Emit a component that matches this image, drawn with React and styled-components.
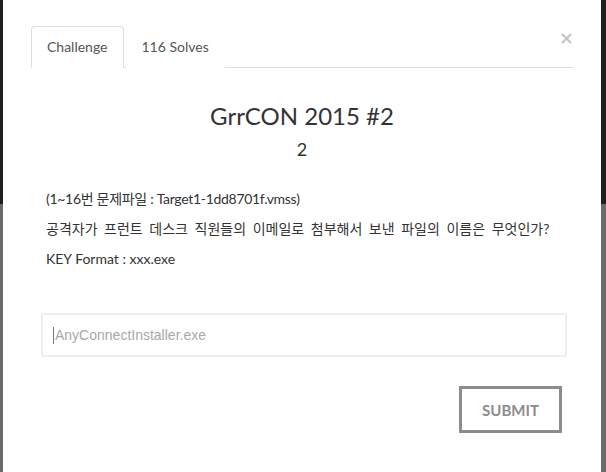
import React from "react";
import styled, { createGlobalStyle } from "styled-components";

const GlobalStyle = createGlobalStyle`
  html, body {
    margin: 0;
    padding: 0;
    width: 606px;
    height: 472px;
    overflow: hidden;
  }
  body {
    font-family: Lato, "Noto Sans CJK KR", sans-serif;
    color: #333;
  }
  * { box-sizing: border-box; }
`;

const Backdrop = styled.div`
  position: relative;
  width: 606px;
  height: 472px;
  display: flex;
  flex-direction: column;
`;

const DarkBand = styled.div`
  height: 204px;
  background: #1f1f1f;
`;

const GreyBand = styled.div`
  flex: 1;
  background: #6a6a6a;
`;

const Modal = styled.div`
  position: absolute;
  left: 3px;
  top: 0;
  width: 598px;
  height: 472px;
  background: #fff;
  padding: 26px 28px 0;
`;

const TabBar = styled.div`
  position: relative;
  display: flex;
  border-bottom: 1px solid #ddd;
  height: 42px;
`;

const Tab = styled.div`
  padding: 10px 15px;
  margin-right: 2px;
  font-size: 14px;
  line-height: 20px;
  color: #555;
  border: 1px solid ${(p) => (p.$active ? "#ddd" : "transparent")};
  border-bottom-color: transparent;
  border-radius: 4px 4px 0 0;
  background: #fff;
  height: 42px;
  margin-bottom: -1px;
`;

const Close = styled.button`
  position: absolute;
  right: 1px;
  top: 7px;
  border: 0;
  background: none;
  padding: 0;
  width: 11px;
  height: 11px;
  display: flex;
  cursor: pointer;
`;

const Title = styled.h3`
  margin: 35px 0 0;
  font-size: 24px;
  font-weight: 400;
  line-height: 26px;
  text-align: center;
  color: #333;
`;

const Value = styled.h4`
  margin: 10px 0 0;
  font-size: 18px;
  font-weight: 400;
  line-height: 20px;
  text-align: center;
  color: #333;
`;

const Description = styled.div`
  margin-top: 30px;
  padding-left: 15px;
`;

const Para = styled.p`
  margin: 0 0 10px;
  font-size: 14px;
  line-height: 20px;
  color: #333;
  font-family: Lato, "Noto Sans CJK KR", sans-serif;
  letter-spacing: ${(p) => p.$tracking || "normal"};
  word-spacing: ${(p) => p.$wordGap || "normal"};
`;

const Form = styled.form`
  margin-top: 44px;
  padding: 0 6px 0 10px;
  display: flex;
  flex-direction: column;
`;

const InputWrap = styled.div`
  position: relative;
`;

const Input = styled.input`
  width: 100%;
  height: 44px;
  border: 2px solid #efefef;
  padding: 0 12px;
  font-family: "Liberation Sans", Arial, sans-serif;
  font-size: 14px;
  color: #555;
  outline: none;
  &::placeholder {
    color: #a9a9a9;
  }
`;

const Caret = styled.span`
  position: absolute;
  left: 12px;
  top: 14px;
  width: 1px;
  height: 17px;
  background: #777;
`;

const Actions = styled.div`
  display: flex;
  justify-content: flex-end;
  margin-top: 29px;
  padding-right: 5px;
`;

const Submit = styled.button`
  width: 103px;
  height: 47px;
  border: 3px solid #8c8c8c;
  background: #fff;
  color: #8c8c8c;
  font-family: Lato, sans-serif;
  font-weight: 700;
  font-size: 15px;
  letter-spacing: 0;
  cursor: pointer;
`;

function App() {
  return (
    <>
      <GlobalStyle />
      <Backdrop>
        <DarkBand />
        <GreyBand />
        <Modal>
          <TabBar>
            <Tab $active>Challenge</Tab>
            <Tab>116 Solves</Tab>
            <Close aria-label="Close">
              <svg width="11" height="11" viewBox="0 0 11 11">
                <path d="M1 1 L10 10 M10 1 L1 10" stroke="#c6c6c6" strokeWidth="2.2" />
              </svg>
            </Close>
          </TabBar>
          <Title>GrrCON 2015 #2</Title>
          <Value>2</Value>
          <Description>
            <Para $tracking="-0.3px">(1~16번 문제파일 : Target1-1dd8701f.vmss)</Para>
            <Para $wordGap="3px">공격자가 프런트 데스크 직원들의 이메일로 첨부해서 보낸 파일의 이름은 무엇인가?</Para>
            <Para>KEY Format : xxx.exe</Para>
          </Description>
          <Form onSubmit={(e) => e.preventDefault()}>
            <InputWrap>
              <Input type="text" placeholder="AnyConnectInstaller.exe" />
              <Caret />
            </InputWrap>
            <Actions>
              <Submit type="submit">SUBMIT</Submit>
            </Actions>
          </Form>
        </Modal>
      </Backdrop>
    </>
  );
}

export default App;
